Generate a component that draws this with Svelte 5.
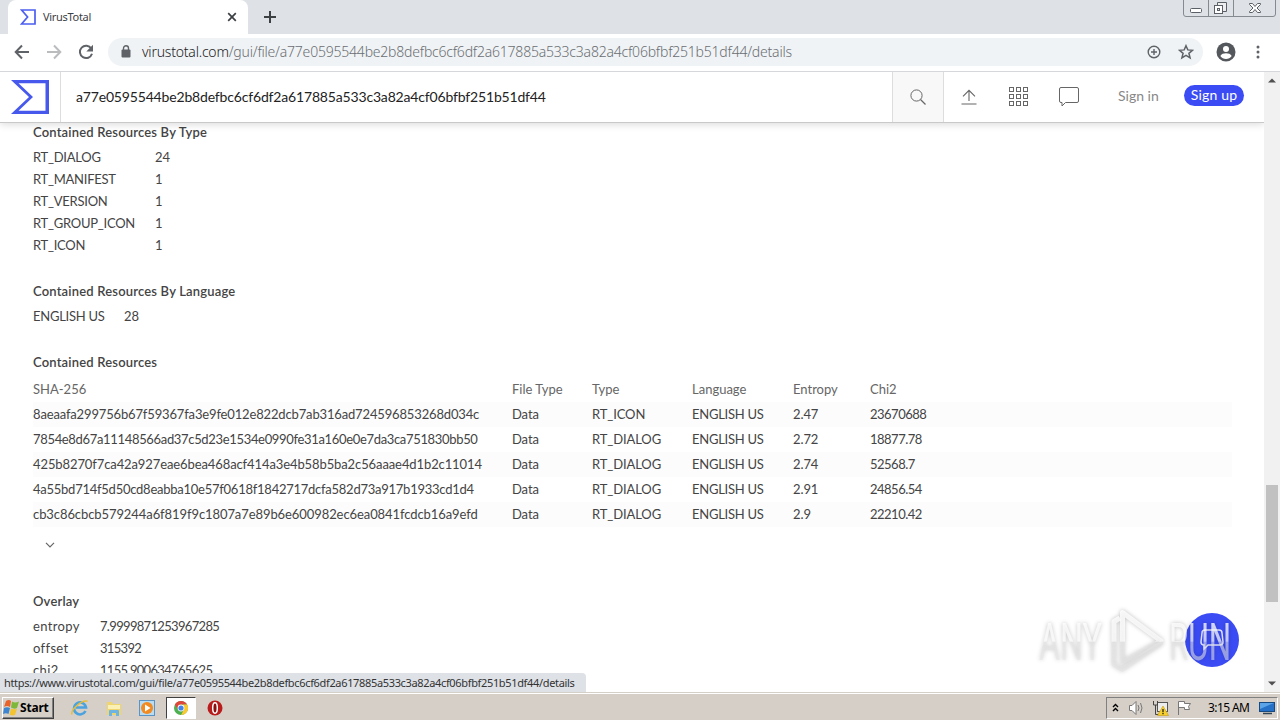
<script lang="ts">
  const hash = 'a77e0595544be2b8defbc6cf6df2a617885a533c3a82a4cf06bfbf251b51df44';
  const path = `/gui/file/${hash}/details`;

  const types = [
    ['RT_DIALOG', '24'],
    ['RT_MANIFEST', '1'],
    ['RT_VERSION', '1'],
    ['RT_GROUP_ICON', '1'],
    ['RT_ICON', '1'],
  ];

  const overlay = [
    ['entropy', '7.9999871253967285'],
    ['offset', '315392'],
    ['chi2', '1155.900634765625'],
  ];

  const columns = ['SHA-256', 'File Type', 'Type', 'Language', 'Entropy', 'Chi2'];

  const resources = [
    ['8aeaafa299756b67f59367fa3e9fe012e822dcb7ab316ad724596853268d034c', 'Data', 'RT_ICON', 'ENGLISH US', '2.47', '23670688'],
    ['7854e8d67a11148566ad37c5d23e1534e0990fe31a160e0e7da3ca751830bb50', 'Data', 'RT_DIALOG', 'ENGLISH US', '2.72', '18877.78'],
    ['425b8270f7ca42a927eae6bea468acf414a3e4b58b5ba2c56aaae4d1b2c11014', 'Data', 'RT_DIALOG', 'ENGLISH US', '2.74', '52568.7'],
    ['4a55bd714f5d50cd8eabba10e57f0618f1842717dcfa582d73a917b1933cd1d4', 'Data', 'RT_DIALOG', 'ENGLISH US', '2.91', '24856.54'],
    ['cb3c86cbcb579244a6f819f9c1807a7e89b6e600982ec6ea0841fcdcb16a9efd', 'Data', 'RT_DIALOG', 'ENGLISH US', '2.9', '22210.42'],
  ];

  const cells = [0, 7, 14];
</script>

<div class="screen">
  <div class="tabstrip">
    <div class="tab">
      <svg class="tab-logo" width="16" height="16" viewBox="0 0 16 16">
        <path d="M1.6 1H15v14H1.6l6-7z" fill="none" stroke="#4c5ff0" stroke-width="1.7" />
      </svg>
      <span class="tab-title">VirusTotal</span>
      <svg width="10" height="10" viewBox="0 0 10 10">
        <path d="M1.2 1.2l7.6 7.6M8.8 1.2L1.2 8.8" stroke="#3c4043" stroke-width="1.7" />
      </svg>
    </div>
    <svg class="new-tab" width="14" height="14" viewBox="0 0 14 14">
      <path d="M7 1v12M1 7h12" stroke="#3c4043" stroke-width="2" />
    </svg>
    <svg class="window-buttons" width="94" height="18" viewBox="0 0 94 18">
      <path d="M.5 0v14q0 2.5 2.5 2.5h87q2.5 0 2.5-2.5V0M25.5 0v16M50.5 0v16" fill="none" stroke="#858990" />
      <rect x="7.5" y="8.5" width="11" height="4" rx="1" fill="#fff" stroke="#5b5f66" />
      <path d="M34.5 2.5h9v9h-9z" fill="#eee" stroke="#5b5f66" />
      <rect x="31.5" y="5.5" width="8" height="8" fill="#fff" stroke="#5b5f66" />
      <rect x="34.5" y="8.5" width="2" height="2" fill="#dee1e6" stroke="#5b5f66" />
      <path d="M66.5 3.5h3l2.5 3 2.5-3h3v1L74 8l3.5 3.5v1h-3L72 9.500l-2.5 3h-3v-1L70 8l-3.5-3.5z" fill="#fff" stroke="#5b5f66" />
    </svg>
  </div>

  <div class="toolbar">
    <svg class="nav" width="16" height="16" viewBox="0 0 16 16">
      <path d="M15 8H2M8 1.5L1.7 8 8 14.5" fill="none" stroke="#5f6368" stroke-width="2" />
    </svg>
    <svg class="nav" width="16" height="16" viewBox="0 0 16 16">
      <path d="M1 8h13M8 1.5L14.3 8 8 14.5" fill="none" stroke="#babcbe" stroke-width="2" />
    </svg>
    <svg class="nav" width="16" height="16" viewBox="0 0 16 16">
      <path d="M13.3 4.5A6.2 6.2 0 1 0 14 9.800" fill="none" stroke="#5f6368" stroke-width="2" />
      <path d="M15 .8v6.700H8.300z" fill="#5f6368" />
    </svg>
    <div class="omnibox">
      <svg width="10" height="13" viewBox="0 0 10 13">
        <path d="M2.5 5V3.300a2.5 2.5 0 0 1 5 0V5" fill="none" stroke="#5f6368" stroke-width="1.4" />
        <rect x=".5" y="4.5" width="9" height="8" rx="1" fill="#5f6368" />
      </svg>
      <div class="url"><span class="url-host">virustotal.com</span>{path}</div>
      <svg class="zoom" width="14" height="14" viewBox="0 0 14 14">
        <circle cx="7" cy="7" r="5.8" fill="none" stroke="#5f6368" stroke-width="1.4" />
        <path d="M7 4v6M4 7h6" stroke="#5f6368" stroke-width="1.4" />
      </svg>
      <svg width="16" height="16" viewBox="0 0 16 16">
        <path d="M8 1.7l1.8 4.2 4.7.4-3.6 3 1.2 4.6L8 11.4l-4.1 2.5 1.2-4.6-3.6-3 4.7-.4z" fill="none" stroke="#5f6368" stroke-width="1.5" />
      </svg>
    </div>
    <svg class="avatar" width="20" height="20" viewBox="0 0 20 20">
      <circle cx="10" cy="10" r="9.5" fill="#54575b" />
      <circle cx="10" cy="7" r="3" fill="#fff" />
      <path d="M4.3 14c1-2 3.4-2.7 5.7-2.7s4.7.7 5.7 2.7c-1.3 2-3.4 3-5.7 3s-4.4-1-5.7-3z" fill="#fff" />
    </svg>
    <svg width="4" height="16" viewBox="0 0 4 16">
      <circle cx="2" cy="3" r="1.5" fill="#5f6368" />
      <circle cx="2" cy="8" r="1.5" fill="#5f6368" />
      <circle cx="2" cy="13" r="1.5" fill="#5f6368" />
    </svg>
  </div>

  <div class="browser-page">
    <div class="page">
      <header>
        <div class="logo">
          <svg width="38" height="34" viewBox="0 0 38 34">
            <path fill-rule="evenodd" d="M0 0h38v34H0l18-17zM7.5 3.2L22 17 7.5 30.8H34.5V3.2z" fill="#4759ec" />
          </svg>
        </div>
        <div class="query">{hash}</div>
        <div class="search">
          <svg width="16" height="16" viewBox="0 0 16 16">
            <circle cx="6.5" cy="6.5" r="5.6" fill="none" stroke="#666" />
            <path d="M10.5 10.5l5 5" stroke="#666" stroke-width="1.2" />
          </svg>
        </div>
        <svg class="upload" width="16" height="16" viewBox="0 0 16 16">
          <path d="M8 12V1.5M2 7.300l6-6 6 6M.5 15h15" fill="none" stroke="#666" stroke-width="1.1" />
        </svg>
        <svg class="apps" width="19" height="20" viewBox="0 0 19 20">
          {#each cells as y}
            {#each cells as x}
              <rect x={x + 0.5} y={y + 0.5} width="4" height="4" fill="none" stroke="#666" />
            {/each}
          {/each}
        </svg>
        <svg class="comments" width="20" height="20" viewBox="0 0 20 20">
          <path d="M2 .5h16q1.500 0 1.500 1.500v12q0 1.500-1.500 1.500H6.500L3 19v-3.500H2Q.5 15.500.5 14V2Q.5.500 2 .500z" fill="none" stroke="#666" />
        </svg>
        <span class="sign-in">Sign in</span>
        <span class="sign-up">Sign up</span>
      </header>

      <main>
        <section>
          <h3>Contained Resources By Type</h3>
          {#each types as [name, count]}
            <div class="row"><span class="key key-type">{name}</span><span>{count}</span></div>
          {/each}
        </section>

        <section>
          <h3>Contained Resources By Language</h3>
          <div class="row"><span class="key key-lang">ENGLISH US</span><span>28</span></div>
        </section>

        <section>
          <h3>Contained Resources</h3>
          <div class="table">
            <div class="tr th">
              {#each columns as column}
                <span>{column}</span>
              {/each}
            </div>
            {#each resources as resource}
              <div class="tr">
                {#each resource as value}
                  <span>{value}</span>
                {/each}
              </div>
            {/each}
          </div>
          <svg class="more" width="10" height="6" viewBox="0 0 10 6">
            <path d="M1 .8l4 4 4-4" fill="none" stroke="#666" stroke-width="1.2" />
          </svg>
        </section>

        <section class="overlay">
          <h3>Overlay</h3>
          {#each overlay as [name, value]}
            <div class="row"><span class="key key-overlay">{name}</span><span class="number">{value}</span></div>
          {/each}
        </section>
      </main>
    </div>

    <div class="scrollbar">
      <svg width="8" height="5" viewBox="0 0 8 5"><path d="M0 4.5L4 .5l4 4z" fill="#505050" /></svg>
      <div class="thumb"></div>
      <svg width="8" height="5" viewBox="0 0 8 5"><path d="M0 .5l4 4 4-4z" fill="#505050" /></svg>
    </div>

    <div class="status"><span>https://www.virustotal.com{path}</span></div>

    <div class="chat">
      <svg width="24" height="22" viewBox="0 0 24 22">
        <path d="M5 1h14q3 0 3 3l1 9q0 3-3 3H8l-4 4v-4q-3 0-3-3l1-9q0-3 3-3z" fill="none" stroke="#e5e7ff" stroke-width="1.5" />
      </svg>
    </div>

    <svg class="watermark" width="204" height="70" viewBox="0 0 204 70">
      <defs>
        <linearGradient id="fade" gradientUnits="userSpaceOnUse" x1="0" y1="0" x2="0" y2="70">
          <stop offset="0" stop-color="#fff" stop-opacity=".85" />
          <stop offset=".5" stop-color="#fff" stop-opacity=".7" />
          <stop offset=".52" stop-color="#e4e4e4" stop-opacity=".6" />
          <stop offset="1" stop-color="#e4e4e4" stop-opacity=".5" />
        </linearGradient>
      </defs>
      <text x="5" y="54" textLength="63" lengthAdjust="spacingAndGlyphs">ANY</text>
      <text x="135" y="54" textLength="62" lengthAdjust="spacingAndGlyphs">RUN</text>
      <path d="M86 12l-6 3.500v43l8 5 40-27" />
      <path d="M88.500 6.500L127 35 88.500 56z" />
    </svg>
  </div>

  <div class="taskbar">
    <div class="start">
      <svg width="17" height="17" viewBox="0 0 17 17">
        <path d="M3 2q3-2 5 0L7 8Q4 6 1 8z" fill="#e8632c" />
        <path d="M9 2.5q3 2 7 0L14 9q-3 1.5-6-.5z" fill="#7db83a" />
        <path d="M1 9q3-1.5 6 0l-1.5 6Q3 13.5 0 15z" fill="#3d86cf" />
        <path d="M8 9.5q3 1.5 6 .2L12 16q-3 1-5.5-.5z" fill="#f4c430" />
      </svg>
      <span>Start</span>
    </div>
    <div class="launch">
      <svg width="18" height="18" viewBox="0 0 18 18">
        <path d="M14.5 12a6 6 0 1 1 .5-3.5H5" fill="none" stroke="#4aa3df" stroke-width="2.6" />
        <path d="M1 15.5C-.5 11 10 1 16.5 2.2" fill="none" stroke="#e9bd35" stroke-width="1.5" />
      </svg>
    </div>
    <div class="launch">
      <svg width="18" height="18" viewBox="0 0 18 18">
        <path d="M2 3h5l1 2h8v11H2z" fill="#efd56f" />
        <path d="M3 6h12v4H3z" fill="#fbf0b3" />
        <path d="M4 17v-5q0-1 1-1h8q1 0 1 1v5h-3v-3H7v3z" fill="#6eb4e2" />
      </svg>
    </div>
    <div class="launch">
      <svg width="18" height="18" viewBox="0 0 18 18">
        <rect x="1.5" y="1.5" width="15" height="15" fill="#b8dcf2" stroke="#5994c4" />
        <circle cx="9" cy="9" r="6" fill="#f18a20" />
        <path d="M7 5.5v7L12.5 9z" fill="#fff" />
      </svg>
    </div>
    <div class="launch active">
      <svg width="16" height="16" viewBox="0 0 16 16">
        <circle cx="8" cy="8" r="7" fill="#4caf50" />
        <path d="M1.9 4.5A7 7 0 0 1 14.1 4.5H8l-3 5z" fill="#e04639" />
        <path d="M14.1 4.5A7 7 0 0 1 8 15l3-5.5-1-5z" fill="#fbc92f" />
        <circle cx="8" cy="8" r="3.4" fill="#fff" />
        <circle cx="8" cy="8" r="2.6" fill="#4285e8" />
      </svg>
    </div>
    <div class="launch">
      <svg width="16" height="16" viewBox="0 0 16 16">
        <circle cx="8" cy="8" r="7.5" fill="#b91c1c" />
        <ellipse cx="8" cy="8" rx="2.3" ry="5.2" fill="#8c1010" stroke="#fff" stroke-width="1.5" />
      </svg>
    </div>
    <div class="tray">
      <svg width="7" height="9" viewBox="0 0 7 9">
        <path d="M1 4l2.5-2.5L6 4M1 8l2.5-2.5L6 8" fill="none" stroke="#000" stroke-width="1.4" />
      </svg>
      <svg class="speaker" width="17" height="16" viewBox="0 0 17 16">
        <path d="M1.5 5.5H4l4-4v13l-4-4H1.5z" fill="#fff" stroke="#777" />
        <path d="M10 5q2 3 0 6M12.5 3q3 5 0 10" fill="none" stroke="#777" />
      </svg>
      <svg class="network" width="17" height="16" viewBox="0 0 17 16">
        <rect x="5.5" y="2.5" width="10" height="9" fill="#ececec" stroke="#555" />
        <path d="M1.5 1v4h4V1M3.5 5v9.500H9" fill="none" stroke="#444" />
        <path d="M11 6l5.5 9.500H5.500z" fill="#f7d02c" stroke="#c79a10" stroke-width=".6" />
        <path d="M11 9v3.200M11 13v1.200" stroke="#222" stroke-width="1.300" />
      </svg>
      <svg class="flag" width="17" height="16" viewBox="0 0 17 16">
        <path d="M2.5 15V1.500h6v2h6l-2 3 1 3h-5v-2h-6" fill="#fff" stroke="#777" />
      </svg>
      <span class="clock">3:15 AM</span>
      <svg width="16" height="14" viewBox="0 0 16 14">
        <rect x=".5" y="1.500" width="15" height="9" fill="#2571c7" stroke="#164a80" />
        <path d="M1 2h14L1 8z" fill="#5ba4e8" />
        <path d="M4 12.500h9" stroke="#345" stroke-width="1.500" />
      </svg>
    </div>
  </div>
</div>

<style>
  :global(body) {
    margin: 0;
    overflow: hidden;
  }
  .screen {
    width: 1280px;
    height: 720px;
    display: flex;
    flex-direction: column;
    overflow: hidden;
    background: #fff;
    font-family: 'Noto Sans', sans-serif;
  }
  .screen * {
    box-sizing: border-box;
  }
  svg {
    display: block;
    flex-shrink: 0;
  }
  .tabstrip {
    display: flex;
    height: 34px;
    flex-shrink: 0;
    padding-left: 8px;
    background: #dee1e6;
  }
  .tab {
    display: flex;
    align-items: center;
    width: 240px;
    padding: 0 11px 0 12px;
    border-radius: 8px 8px 0 0;
    background: #fff;
  }
  .tab-title {
    flex: 1;
    margin: -2px 0 0 7px;
    font-size: 11px;
    letter-spacing: -0.3px;
    color: #3c4043;
  }
  .new-tab {
    margin: 10px auto 0 15px;
  }
  .window-buttons {
    margin-right: 3px;
  }
  .toolbar {
    display: flex;
    align-items: center;
    height: 38px;
    flex-shrink: 0;
    padding: 0 20px 2px 14px;
    border-bottom: 1px solid #d5d7da;
  }
  .nav {
    margin-right: 16px;
  }
  .omnibox {
    display: flex;
    align-items: center;
    width: 1095px;
    height: 28px;
    margin-left: -2px;
    padding: 0 9px 0 13px;
    border-radius: 14px;
    background: #f0f3f5;
  }
  .url {
    flex: 1;
    margin-left: 11px;
    font-size: 14px;
    font-weight: 300;
    letter-spacing: -0.21px;
    white-space: nowrap;
    color: #6a6e73;
  }
  .url-host {
    color: #202124;
  }
  .zoom {
    margin-right: 17px;
  }
  .avatar {
    margin: 0 20px 0 13px;
  }
  .browser-page {
    position: relative;
    display: flex;
    height: 620px;
    flex-shrink: 0;
  }
  .page {
    display: flex;
    flex-direction: column;
    width: 1264px;
    overflow: hidden;
    font-family: Lato, sans-serif;
    font-size: 13px;
    color: #444;
  }
  header {
    position: relative;
    display: flex;
    align-items: center;
    height: 51px;
    flex-shrink: 0;
    border-bottom: 1px solid #c9c9c9;
    background: #fff;
    box-shadow: 0 1px 8px rgba(0, 0, 0, 0.16);
  }
  .logo {
    display: flex;
    align-items: center;
    width: 61px;
    height: 50px;
    padding-left: 11px;
    border-right: 1px solid #ddd;
  }
  .query {
    width: 831px;
    padding: 0 0 2px 15px;
    font-size: 14px;
    letter-spacing: -0.17px;
    color: #222;
  }
  .search {
    display: flex;
    align-items: center;
    justify-content: center;
    width: 52px;
    height: 50px;
    border: solid #ddd;
    border-width: 0 1px;
    background: #f8f8f8;
  }
  .upload {
    margin-left: 17px;
  }
  .apps {
    margin-left: 32px;
  }
  .comments {
    margin-left: 31px;
  }
  .sign-in {
    width: 66px;
    margin: -4px 0 0 39px;
    font-size: 14px;
    color: #888;
  }
  .sign-up {
    width: 60px;
    height: 21px;
    margin-top: -3px;
    border-radius: 11px;
    background: #3b4cf5;
    color: #fff;
    font-size: 14px;
    letter-spacing: 0.2px;
    line-height: 20px;
    text-align: center;
  }
  main {
    padding-left: 33px;
    margin-top: -2px;
  }
  section {
    margin-bottom: 24px;
  }
  h3 {
    margin: 0 0 3px;
    font-size: 13px;
    line-height: 22px;
    font-weight: 600;
    letter-spacing: 0.18px;
    color: #444;
  }
  .row {
    display: flex;
    line-height: 22px;
  }
  .key-type {
    width: 122px;
    letter-spacing: -0.25px;
  }
  .key-lang {
    width: 91px;
    letter-spacing: -0.25px;
  }
  .key-overlay {
    width: 67px;
    letter-spacing: 0.35px;
  }
  .number {
    letter-spacing: -0.67px;
  }
  .table {
    width: 1199px;
    margin-top: 4px;
  }
  .tr {
    display: grid;
    grid-template-columns: 479px 80px 100px 101px 77px 1fr;
    line-height: 25px;
    letter-spacing: -0.1px;
  }
  .tr > span:first-child {
    letter-spacing: -0.15px;
  }
  .tr:nth-child(3) > span:first-child {
    letter-spacing: -0.33px;
  }
  .tr:nth-child(4) > span:first-child {
    letter-spacing: -0.1px;
  }
  .tr:nth-child(5) > span:first-child {
    letter-spacing: -0.25px;
  }
  .tr:nth-child(6) > span:first-child {
    letter-spacing: -0.08px;
  }
  .tr > span:nth-child(4) {
    letter-spacing: -0.25px;
  }
  .tr > span:last-child {
    letter-spacing: -0.5px;
  }
  .tr:nth-child(even) {
    background: #fcfcfc;
  }
  .tr.th {
    color: #666;
  }
  .tr.th > span {
    letter-spacing: 0;
  }
  .more {
    margin: 15px 0 0 12px;
  }
  .overlay {
    margin-top: 42px;
  }
  .scrollbar {
    display: flex;
    flex-direction: column;
    align-items: center;
    width: 16px;
    padding: 6px 0;
    background: #f1f1f1;
  }
  .thumb {
    width: 12px;
    height: 117px;
    margin: 402px 0 auto;
    background: #c1c1c1;
  }
  .status {
    position: absolute;
    left: 0;
    bottom: 0;
    width: 586px;
    height: 19px;
    padding-left: 4px;
    border-radius: 0 4px 0 0;
    background: #dee1e6;
    font-size: 11px;
    letter-spacing: -0.34px;
    line-height: 19px;
    color: #333;
    white-space: nowrap;
  }
  .chat {
    position: absolute;
    left: 1185px;
    top: 541px;
    display: flex;
    align-items: center;
    justify-content: center;
    width: 54px;
    height: 54px;
    border-radius: 50%;
    background: #3b4cf5;
  }
  .watermark {
    position: absolute;
    left: 1034px;
    top: 534px;
    overflow: visible;
    font-family: Roboto, sans-serif;
    font-size: 52px;
    filter: drop-shadow(0 0 2px rgba(0, 0, 0, 0.3));
  }
  .watermark text {
    fill: url(#fade);
  }
  .watermark path {
    fill: none;
    stroke: url(#fade);
    stroke-width: 5px;
    stroke-linejoin: round;
  }
  .taskbar {
    display: flex;
    align-items: center;
    height: 28px;
    padding: 2px 2px 0;
    border-top: 1px solid #d4d0c8;
    box-shadow: inset 0 1px #fff;
    background: #d6cfc7;
  }
  .start {
    display: flex;
    align-items: center;
    width: 52px;
    height: 22px;
    margin-right: 11px;
    border: 1px solid;
    border-color: #fff #404040 #404040 #fff;
    box-shadow: inset -1px -1px #808080;
    font-size: 12px;
    font-weight: 700;
    letter-spacing: -0.2px;
    color: #000;
  }
  .launch {
    display: flex;
    align-items: center;
    justify-content: center;
    width: 30px;
    height: 22px;
    margin-right: 3.7px;
  }
  .active {
    border: 1px solid;
    border-color: #404040 #fff #fff #404040;
    background: #fff;
  }
  .tray {
    display: flex;
    align-items: center;
    width: 172px;
    height: 22px;
    margin-left: auto;
    padding-left: 5px;
    border: 1px solid;
    border-color: #808080 #fff #fff #808080;
    font-size: 12px;
    letter-spacing: -0.6px;
    color: #000;
  }
  .speaker {
    margin-left: 9px;
  }
  .network,
  .flag {
    margin-left: 7px;
  }
  .clock {
    margin: 0 10px 0 15px;
    white-space: nowrap;
  }
</style>
